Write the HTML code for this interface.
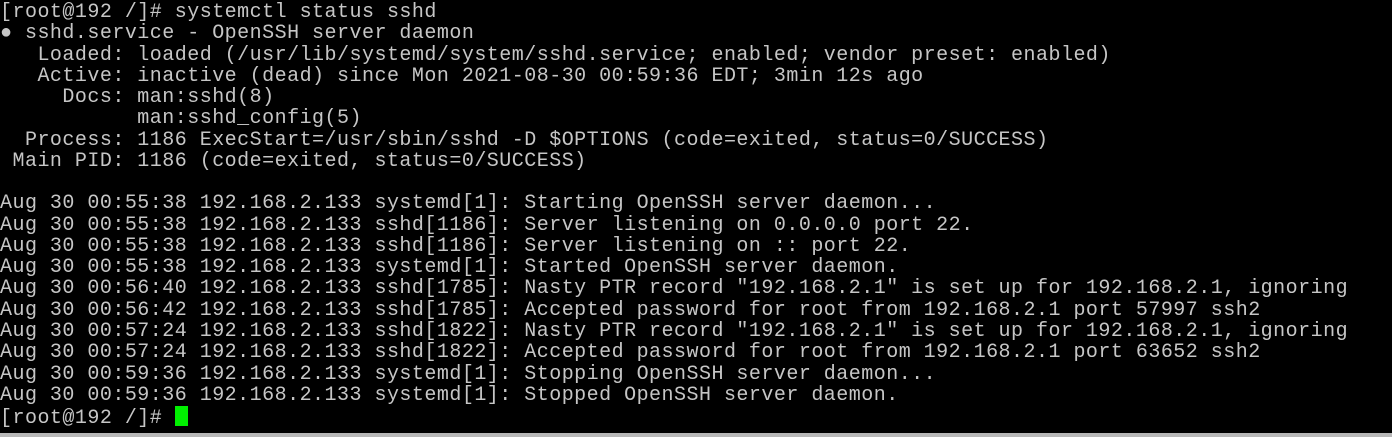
<!DOCTYPE html>
<html><head><style>
html,body{margin:0;padding:0;background:#000;width:1392px;height:437px;overflow:hidden}
pre{margin:0;padding:2px 0 0 0;font-family:"Liberation Mono",monospace;font-size:20px;letter-spacing:0.48px;line-height:21.26px;color:#c6c6c6;white-space:pre}
.cur{display:inline-block;width:13px;height:20px;background:#00f000;vertical-align:-3px}
.bar{position:absolute;left:0;top:433px;width:1392px;height:4px;background:#b8b8b8}
</style></head><body>
<pre>[root@192 /]# systemctl status sshd
● sshd.service - OpenSSH server daemon
   Loaded: loaded (/usr/lib/systemd/system/sshd.service; enabled; vendor preset: enabled)
   Active: inactive (dead) since Mon 2021-08-30 00:59:36 EDT; 3min 12s ago
     Docs: man:sshd(8)
           man:sshd_config(5)
  Process: 1186 ExecStart=/usr/sbin/sshd -D $OPTIONS (code=exited, status=0/SUCCESS)
 Main PID: 1186 (code=exited, status=0/SUCCESS)

Aug 30 00:55:38 192.168.2.133 systemd[1]: Starting OpenSSH server daemon...
Aug 30 00:55:38 192.168.2.133 sshd[1186]: Server listening on 0.0.0.0 port 22.
Aug 30 00:55:38 192.168.2.133 sshd[1186]: Server listening on :: port 22.
Aug 30 00:55:38 192.168.2.133 systemd[1]: Started OpenSSH server daemon.
Aug 30 00:56:40 192.168.2.133 sshd[1785]: Nasty PTR record "192.168.2.1" is set up for 192.168.2.1, ignoring
Aug 30 00:56:42 192.168.2.133 sshd[1785]: Accepted password for root from 192.168.2.1 port 57997 ssh2
Aug 30 00:57:24 192.168.2.133 sshd[1822]: Nasty PTR record "192.168.2.1" is set up for 192.168.2.1, ignoring
Aug 30 00:57:24 192.168.2.133 sshd[1822]: Accepted password for root from 192.168.2.1 port 63652 ssh2
Aug 30 00:59:36 192.168.2.133 systemd[1]: Stopping OpenSSH server daemon...
Aug 30 00:59:36 192.168.2.133 systemd[1]: Stopped OpenSSH server daemon.
[root@192 /]# <span class="cur"></span></pre>
<div class="bar"></div>
</body></html>
